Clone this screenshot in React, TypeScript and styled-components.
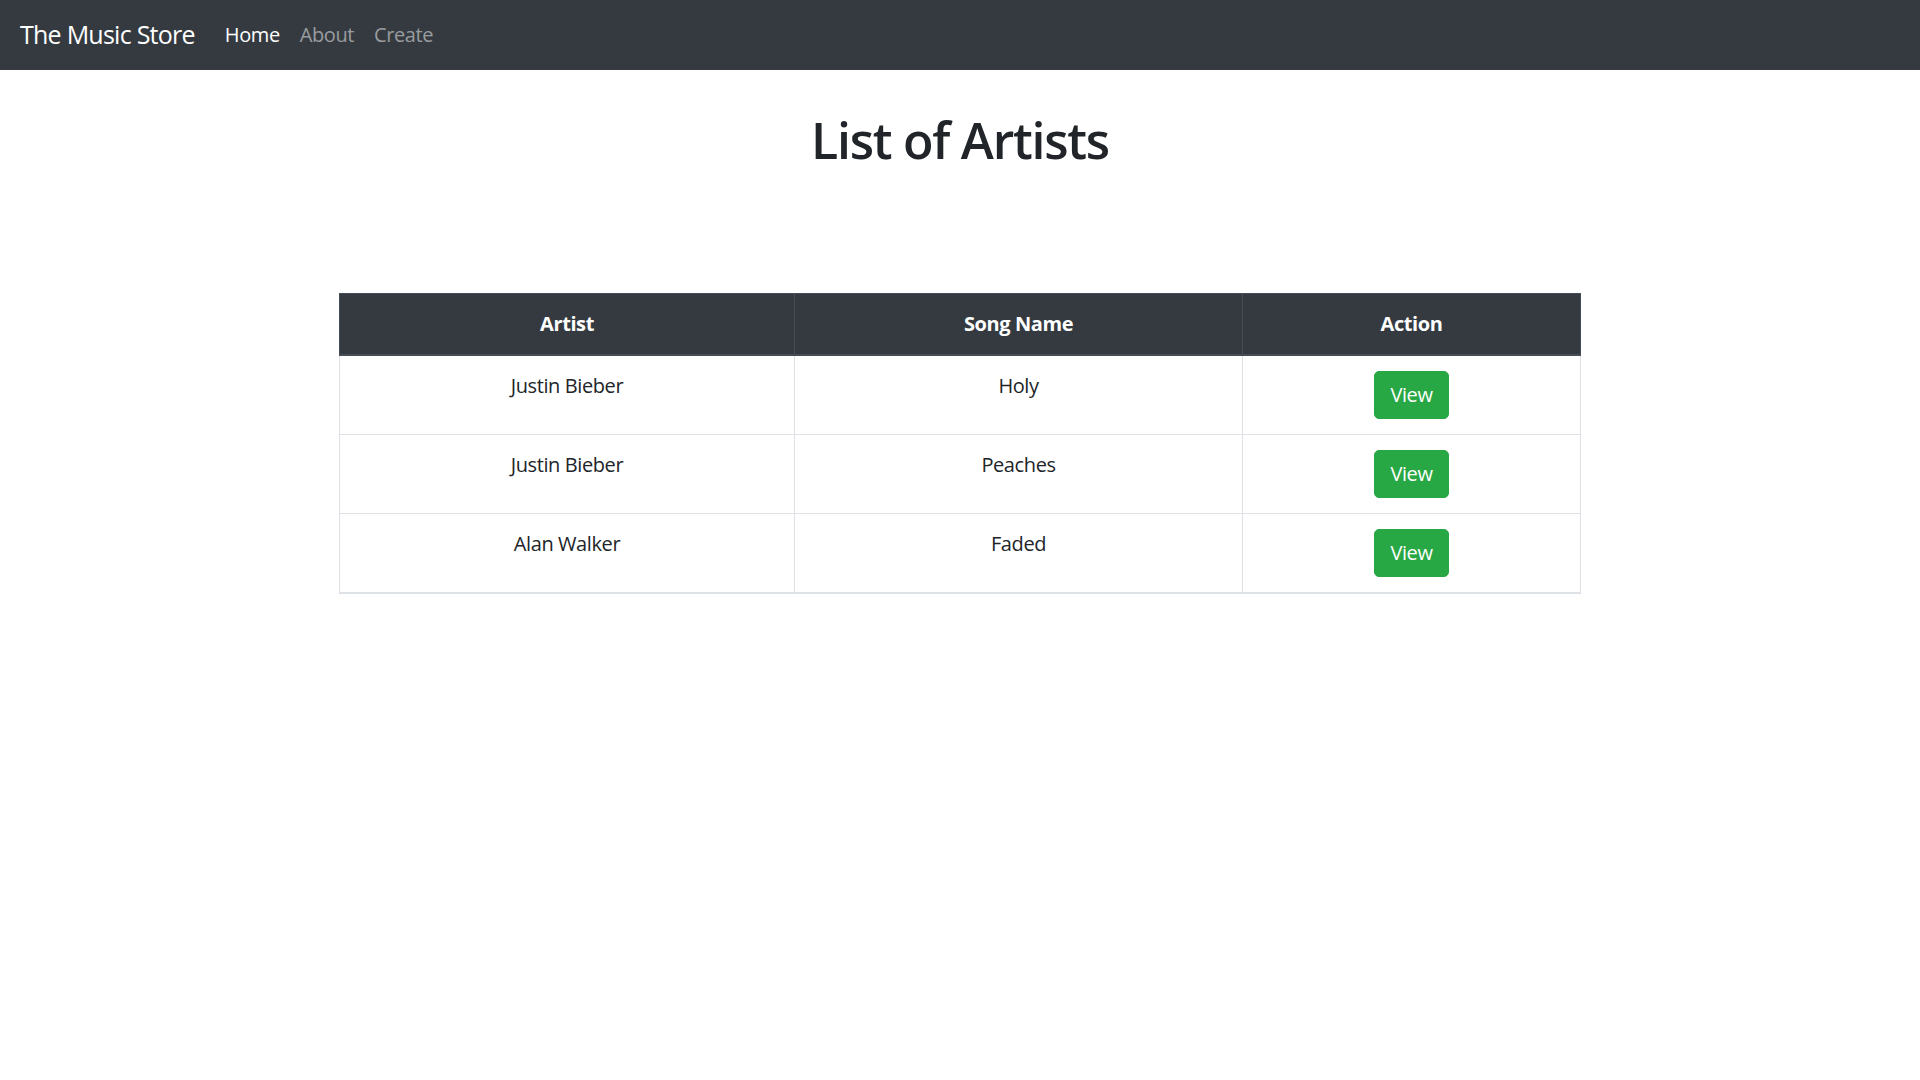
import { createGlobalStyle, styled } from 'styled-components';

const GlobalStyle = createGlobalStyle`
  * { box-sizing: border-box; }
  body {
    margin: 0;
    background: #fff;
    color: #212529;
    font-family: "Open Sans", "Noto Sans", "Liberation Sans", sans-serif;
    font-size: 20px;
    line-height: 1.5;
    letter-spacing: -0.02em;
  }
`;

type Row = { artist: string; song: string };

const rows: Row[] = [
  { artist: 'Justin Bieber', song: 'Holy' },
  { artist: 'Justin Bieber', song: 'Peaches' },
  { artist: 'Alan Walker', song: 'Faded' },
];

export default function App() {
  return (
    <>
      <GlobalStyle />
      <StyledNavbar>
        <StyledBrand href="#">The Music Store</StyledBrand>
        <StyledNavList>
          <StyledNavLink href="#" $active>Home</StyledNavLink>
          <StyledNavLink href="#">About</StyledNavLink>
          <StyledNavLink href="#">Create</StyledNavLink>
        </StyledNavList>
      </StyledNavbar>
      <StyledMain>
        <StyledTitle>List of Artists</StyledTitle>
        <StyledTable>
          <thead>
            <tr>
              <StyledTh style={{ width: 455 }}>Artist</StyledTh>
              <StyledTh style={{ width: 448 }}>Song Name</StyledTh>
              <StyledTh>Action</StyledTh>
            </tr>
          </thead>
          <tbody>
            {rows.map((r, i) => (
              <tr key={i}>
                <StyledTd>{r.artist}</StyledTd>
                <StyledTd>{r.song}</StyledTd>
                <StyledTd>
                  <StyledViewButton type="button">View</StyledViewButton>
                </StyledTd>
              </tr>
            ))}
          </tbody>
        </StyledTable>
      </StyledMain>
    </>
  );
}

const StyledNavbar = styled.nav`
  display: flex;
  align-items: center;
  height: 70px;
  padding: 0 20px;
  background-color: #343a40;
`;

const StyledBrand = styled.a`
  margin-right: 20px;
  font-size: 25px;
  line-height: 1.5;
  color: #fff;
  text-decoration: none;
  white-space: nowrap;
  letter-spacing: -0.03em;
`;

const StyledNavList = styled.div`
  display: flex;
`;

const StyledNavLink = styled.a<{ $active?: boolean }>`
  padding: 10px;
  color: ${({ $active }) => ($active ? '#fff' : 'rgba(255, 255, 255, 0.5)')};
  text-decoration: none;
`;

const StyledMain = styled.main`
  display: flex;
  flex-direction: column;
  align-items: center;
`;

const StyledTitle = styled.h1`
  margin: 40px 0 0;
  font-size: 50px;
  font-weight: 600;
  line-height: 60px;
  color: #212529;
  letter-spacing: -0.025em;
`;

const StyledTable = styled.table`
  width: 1242px;
  margin-top: 123px;
  border-collapse: collapse;
  border: 1px solid #dee2e6;
  border-bottom-width: 2px;
`;

const StyledTh = styled.th`
  padding: 15px;
  background-color: #343a40;
  color: #fff;
  font-weight: 700;
  text-align: center;
  vertical-align: bottom;
  border: 1px solid #454d55;
  border-bottom-width: 2px;
`;

const StyledTd = styled.td`
  padding: 15px;
  text-align: center;
  vertical-align: top;
  border: 1px solid #dee2e6;
`;

const StyledViewButton = styled.button`
  display: inline-block;
  padding: 8px 15px;
  font-family: inherit;
  font-size: 20px;
  line-height: 1.5;
  letter-spacing: inherit;
  color: #fff;
  background-color: #28a745;
  border: 1px solid #28a745;
  border-radius: 5px;
  cursor: pointer;
`;
